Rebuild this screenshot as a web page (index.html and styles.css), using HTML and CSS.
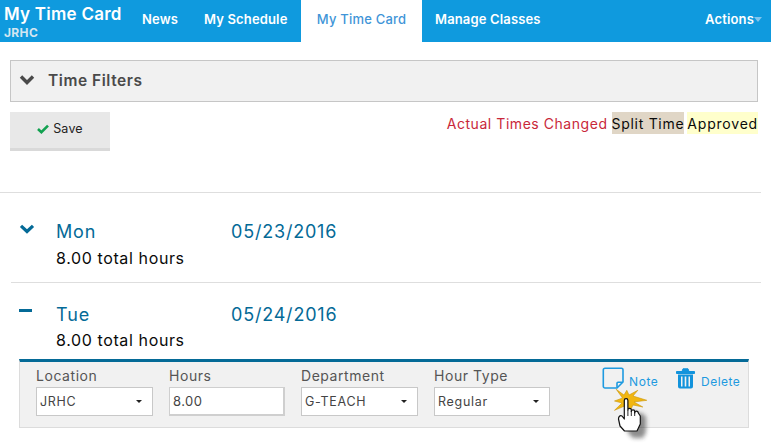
FILE: index.html
```html
<!DOCTYPE html>
<html lang="en">
<head>
<meta charset="utf-8">
<title>My Time Card</title>
<link rel="stylesheet" href="styles.css">
</head>
<body>
<header class="nav">
  <div class="brand"><div class="brand-title">My Time Card</div><div class="brand-sub">JRHC</div></div>
  <a class="tab tab-news">News</a>
  <a class="tab tab-sched">My Schedule</a>
  <a class="tab tab-active">My Time Card</a>
  <a class="tab tab-classes">Manage Classes</a>
  <a class="actions">Actions<span class="actions-caret"></span></a>
</header>
<main class="content">
  <section class="filters">
    <svg class="chev-dark" width="16" height="12" viewBox="0 0 16 12"><path d="M2 2.5 8 8.5 14 2.5" fill="none" stroke="#4a4a4a" stroke-width="3.4"/></svg>
    <span class="filters-title">Time Filters</span>
  </section>
  <div class="toolbar">
    <button class="save"><svg width="12" height="10" viewBox="0 0 12 10"><path d="M1 5 4.400 8.200 11 1.600" fill="none" stroke="#12a150" stroke-width="2.600"/></svg>Save</button>
    <div class="legend">
      <span class="lg-red">Actual Times Changed</span>
      <span class="lg-split">Split Time</span>
      <span class="lg-appr">Approved</span>
    </div>
  </div>
  <div class="days">
    <section class="day">
      <div class="day-head">
        <svg class="day-icon" width="16" height="10" viewBox="0 0 16 10"><path d="M2 1.800 8 7.500 14 1.800" fill="none" stroke="#046a97" stroke-width="3.200"/></svg>
        <span class="day-name">Mon</span><span class="day-date">05/23/2016</span>
      </div>
      <div class="day-total">8.00 total hours</div>
    </section>
    <section class="day day-open">
      <div class="day-head">
        <span class="minus"></span>
        <span class="day-name">Tue</span><span class="day-date">05/24/2016</span>
      </div>
      <div class="day-total">8.00 total hours</div>
    </section>
    <section class="entry">
      <div class="field f1"><label class="lbl">Location</label><div class="select"><span>JRHC</span><i class="caret"></i></div></div>
      <div class="field f2"><label class="lbl">Hours</label><div class="input">8.00</div></div>
      <div class="field f3"><label class="lbl">Department</label><div class="select"><span>G-TEACH</span><i class="caret"></i></div></div>
      <div class="field f4"><label class="lbl">Hour Type</label><div class="select"><span>Regular</span><i class="caret"></i></div></div>
      <div class="links">
        <a class="link link-note">
          <svg width="22" height="22" viewBox="0 0 22 22"><path d="M3 1.200H19.500a1.500 1.500 0 0 1 1.500 1.500V15L15 21H3a1.700 1.700 0 0 1-1.700-1.700V3A1.700 1.700 0 0 1 3 1.200Z" fill="none" stroke="#1e9ae0" stroke-width="1.600"/><path d="M20.500 15.200H16a1 1 0 0 0-1 1V20.500" fill="none" stroke="#1e9ae0" stroke-width="1.600"/></svg>
          <span>Note</span>
        </a>
        <a class="link link-del">
          <svg width="19" height="21" viewBox="0 0 19 21"><path d="M.5 3.500H18.500V5.500H.5Z M6 3.500 7 .8H12L13 3.500" fill="#1293dc" stroke="#1293dc" stroke-width="1"/><path fill-rule="evenodd" d="M2 6.500H17V18.500A2 2 0 0 1 15 20.500H4A2 2 0 0 1 2 18.500ZM5 8.500V18.500H6.500V8.500ZM8.700 8.500V18.500H10.300V8.500ZM12.500 8.500V18.500H14V8.500Z" fill="#1293dc"/></svg>
          <span>Delete</span>
        </a>
      </div>
      <svg class="cursor" width="46" height="62" viewBox="0 0 46 62">
        <defs><filter id="sh" x="-40%" y="-40%" width="180%" height="180%"><feGaussianBlur stdDeviation="2"/></filter></defs>
        <path d="M14 42 17 28 22 30 26 31 30 32 33 35V50L30 56H20L15 51Z" fill="#333" opacity=".55" filter="url(#sh)"/>
        <path d="M3.200 7.300 11 13 13.800 8.300 16 13 24.800 8.300 20 14 33.800 18.300 21 20 29.800 25 20 23 17 29 14 23 1.500 28.300 9 21 1.500 19 9.500 16Z" fill="#f1b60f" stroke="#c9950a" stroke-width=".6"/>
        <path d="M11.300 18.500a1.800 1.800 0 0 1 3.600 0V28a1.700 1.700 0 0 1 3.400 0V29.500a1.700 1.700 0 0 1 3.400 0V31a1.800 1.800 0 0 1 3.600 0 l2 3V42L24 49H11.500L7 44 5.500 37C5.500 34.500 7 33 9 34L11.300 37Z" fill="#fff" stroke="#111" stroke-width="1.200" stroke-linejoin="round"/>
        <path d="M14.900 28V34M18.300 29V34M21.700 30V34" stroke="#111" stroke-width=".9"/>
      </svg>
    </section>
  </div>
</main>
</body>
</html>
```
FILE: styles.css
```css
* { box-sizing: border-box; }
html, body { margin: 0; padding: 0; background: #fff; }
body { width: 776px; height: 445px; overflow: hidden; font-family: "Inter", "Liberation Sans", sans-serif; color: #111; }

.nav { display: flex; align-items: stretch; height: 42px; width: 771px; background: #0f9ade; color: #fff; }
.brand { width: 142px; padding: 4px 0 0 4px; }
.brand-title { font-size: 17px; line-height: 20px; font-weight: 600; letter-spacing: .25px; white-space: nowrap; }
.brand-sub { margin-top: 2px; font-size: 12px; line-height: 14px; font-weight: 700; color: #d3e6f1; letter-spacing: .35px; }
.tab { display: flex; align-items: center; padding-bottom: 4px; font-size: 13px; font-weight: 600; letter-spacing: .15px; white-space: nowrap; color: #fff; }
.tab-news { width: 62px; }
.tab-sched { width: 97px; }
.tab-active { width: 121px; justify-content: center; background: #fff; color: #3f95d8; font-weight: 500; letter-spacing: .2px; }
.tab-classes { margin-left: 13px; }
.actions { margin-left: auto; margin-right: 9px; padding-bottom: 4px; display: flex; align-items: center; font-size: 13px; font-weight: 600; letter-spacing: .15px; }
.actions-caret { width: 0; height: 0; margin-top: 1px; border: 4px solid transparent; border-top: 5px solid #7fc5ee; border-bottom: 0; }

.content { padding: 18px 0 0 10px; width: 771px; }
.filters { display: flex; align-items: center; width: 748px; height: 42px; padding: 0 0 2px 8px; background: #f1f1f1; border: 1px solid #c6c6c6; }
.filters-title { margin-left: 13px; font-size: 15.500px; font-weight: 600; color: #4a4a4a; letter-spacing: .55px; }

.toolbar { display: flex; justify-content: space-between; width: 748px; margin-top: 10px; height: 80px; }
.save { display: flex; align-items: center; justify-content: center; gap: 4px; width: 100px; height: 39px; padding: 0 0 3px; background: #e8e8e8; border: 0; border-bottom: 3px solid #d9d9d9; font: 400 12.500px "Inter", "Liberation Sans", sans-serif; letter-spacing: .2px; color: #222; }
.legend { display: flex; align-items: stretch; height: 22px; font-size: 14px; line-height: 23px; letter-spacing: .55px; white-space: nowrap; }
.lg-red { color: #c9283a; margin-right: 4px; }
.lg-split { background: #e0d6c6; margin-right: 3px; letter-spacing: .7px; color: #0a0a0a; }
.lg-appr { background: #ffffcc; letter-spacing: .8px; color: #0a0a0a; }

.days { width: 761px; margin-left: -10px; border-top: 1px solid #dedede; padding-top: 26px; }
.day { margin-left: 11px; padding: 0 0 13px 8px; border-bottom: 1px solid #dedede; }
.day-open { border-bottom: 0; padding-top: 19px; padding-bottom: 0; }
.day-head { display: flex; align-items: center; height: 24px; }
.day-icon { margin-top: -4px; flex: none; }
.minus { width: 13px; height: 3px; margin-right: 3px; margin-top: -8px; background: #046a97; flex: none; }
.day-name { margin-left: 21px; width: 175px; font-size: 18px; color: #046a97; letter-spacing: .85px; }
.day-date { font-size: 18px; color: #046a97; letter-spacing: .8px; }
.day-total { margin: 4px 0 0 37px; height: 22px; font-size: 16px; line-height: 22px; letter-spacing: .62px; color: #0a0a0a; }
.day-open .day-total { margin-top: 3px; }

.entry { position: relative; display: flex; margin: 8px 0 0 19px; width: 730px; height: 69px; background: #f1f1f1; border: 1px solid #dcdcdc; border-top: 3px solid #046a97; padding: 4px 0 0 16px; }
.field { display: flex; flex-direction: column; margin-right: 16px; }
.f1, .f3 { width: 117px; }
.f2 { width: 116px; }
.f4 { width: 116px; }
.lbl { font-size: 14px; line-height: 19px; height: 21px; letter-spacing: .55px; color: #555; }
.select, .input { display: flex; align-items: center; justify-content: space-between; height: 29px; background: #fff; border: 1px solid #c8c8c8; padding: 0 10px 0 3px; font-size: 12.500px; letter-spacing: .7px; color: #444; }
.input { border-width: 1px 2px 2px 1px; border-color: #cfcfcf; font-size: 13px; letter-spacing: .45px; }
.caret { width: 0; height: 0; border: 3px solid transparent; border-top: 3px solid #222; border-bottom: 0; }

.links { display: flex; margin: 1px 0 0 36px; }
.link { display: flex; color: #1e9ae0; font-size: 12px; letter-spacing: .5px; }
.link-note { width: 74px; }
.link-note svg { flex: none; }
.link-note span { margin: 7px 0 0 5px; line-height: 16px; letter-spacing: .6px; }
.link-del svg { flex: none; margin-top: 1px; }
.link-del span { margin: 7px 0 0 6px; line-height: 16px; }
.cursor { position: absolute; left: 593px; top: 20px; }
```
